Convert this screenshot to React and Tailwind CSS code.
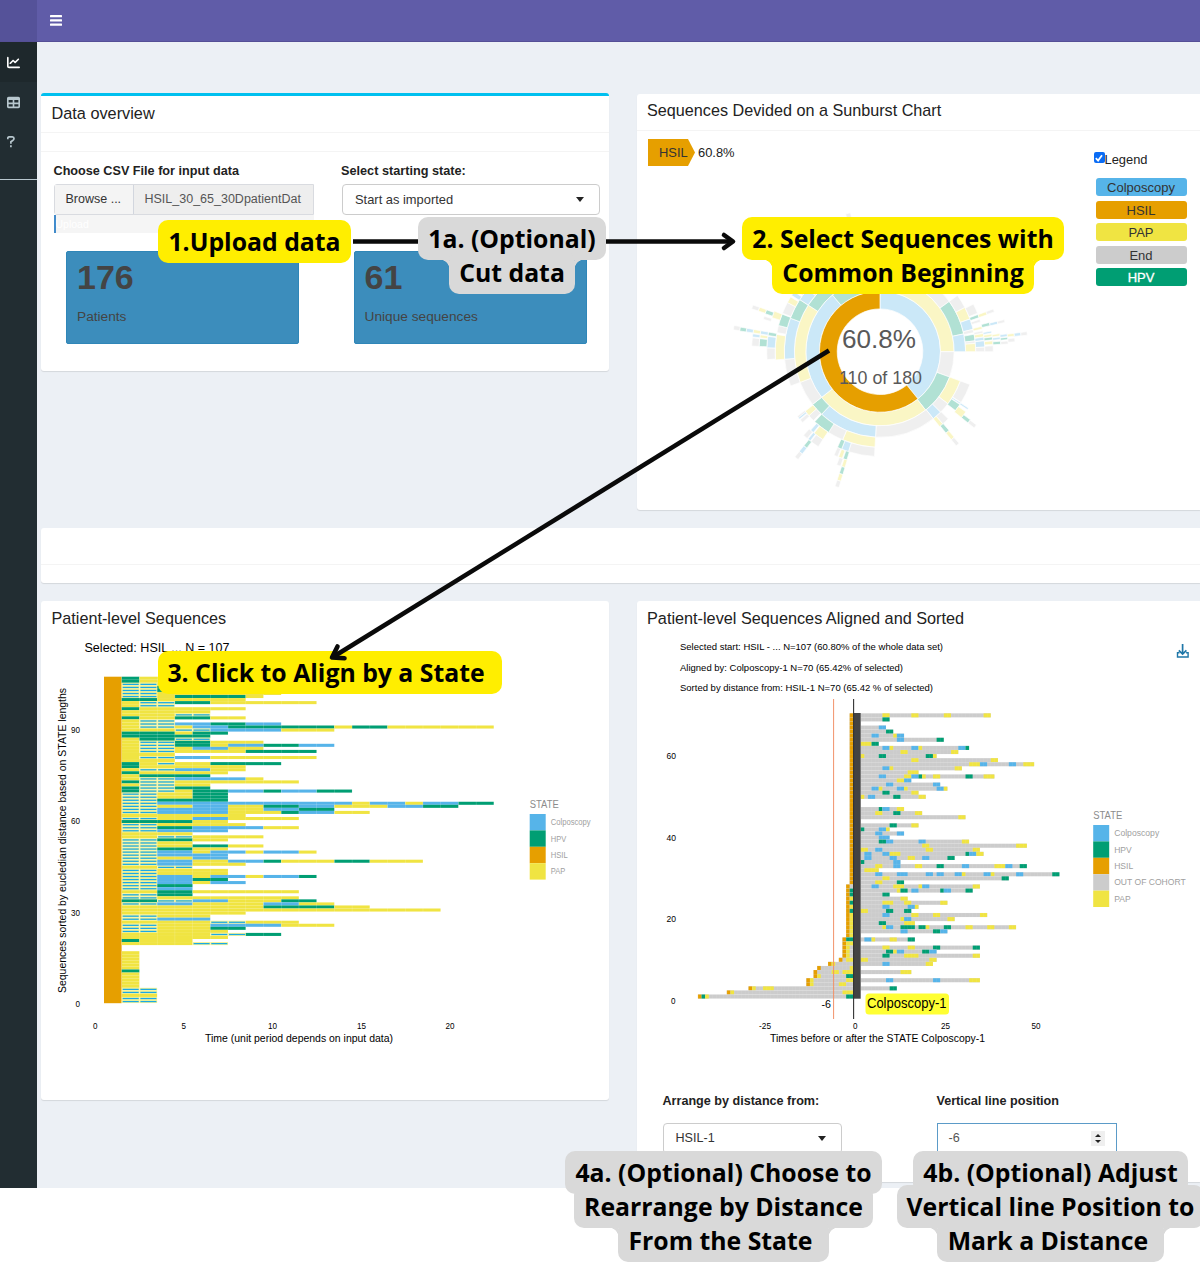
import React from "react";
import { FaChartLine, FaTable } from "react-icons/fa6";

const COLORS = {
  C: "#56b4e9",
  V: "#009e73",
  H: "#e69f00",
  P: "#f0e442",
  Y: "#f0e442",
  G: "#cccccc",
};

/* One string per patient: states that follow the first HSIL event. */
const SEQUENCES = [
  "VPPPP", "VPPPP", "bbPPP", "bbVPP", "bbVPP", "bbPPPPPPP", "bbPVVVVP", "VVPPPPP", "PbbVVPPPPPP", "Pbb",
  "VPPPPPP", "PPPPP", "PPPbb", "VPPVVPP", "Pbb", "PbbCCVVCC", "PbbPCCVVVVVVPVVPPPPPP", "PPPbbCCCCPPP", "VVVPVV", "VVVVV",
  "PVVbb", "PbbVVPPP", "PbbVVPCCVVCC", "PbbPCCPP", "PbbPPPPVVVV", "PPP", "PbbCCPPPPPP", "PPP", "VPbPPVVVV", "VPPPPPP",
  "PbbCCPP", "VPPPPP", "PVVVV", "PbbCCCCP", "VbbPPPPPPP", "PbbPP", "VbbVV", "VbbPVVCCVCCVV", "bbPPVV", "bbPPVV",
  "bbVVVV", "bbCCCCCCCCCCCPCCPCCVV", "bbPPCCPPVVCCPPPCCVV", "bbCCCCPPCCVV", "bbCCCCPPPVCCPP", "PPPPPPP", "bbPPCCPPPP", "VVVVPP", "bbPPPPP", "bbVVCCCCPP",
  "bbCCCC", "PPPP", "PPbbPPPP", "bbVVPP", "bbPP", "bbPPVVPP", "bbVVPP", "bbCCPCCPCCP", "bbCCCC", "bbPPCC",
  "bbCCPPCCVPPPVVPPP", "bbCCPPP", "PPbb", "bbPPPP", "bbPPPP", "bbCCPCCPCCV", "bbCCVV", "bbCCPCC", "bbVV", "bbCC",
  "PPVVPPPPPP", "bbVV", "bbPPPPPPPP", "VVbbCCPPPVV", "bbCCPPPPCCPP", "PPPPPPPPVVVVPP", "PPPPPPPPPPPPPPPPPP", "PPPPPPP", "bbPPP", "bbCCC",
  "PPPPPbbPPP", "bbPPPCCCCPPP", "bbPPPVV", "bbPPPP", "PPPPPbbVV", "PPPPPP", "VPPP", "PPPPbb", "", "",
  "P", "P", "P", "P", "P", "P", "V", "P", "P", "P", "P", "P", "bb", "bb", "PP", "bb", "bb",
];

function runs(text) {
  const out = [];
  for (let i = 0; i < text.length; i += 1) {
    const last = out[out.length - 1];
    if (last && last.c === text[i] && text[i] !== "b") last.n += 1;
    else out.push({ c: text[i], s: i, n: 1 });
  }
  return out;
}

/* Coloured spans after the aligned event; grey fills the space between them. */
const AFTER = [
  "Y6-8 Y14-16 Y23-25 Y34-36", "V6-8", "", "C5-7", "V7-9", "C3-5 Y9-10 C10-12", "C10-12 V21-23", "Y0-3 V3-5",
  "C6-8 Y8-9 C14-16 Y16-17 C27-29 V29-30", "Y11-13 Y25-27", "Y0-1 V5-7 V18-20 Y20-21", "Y14-16 Y36-38",
  "Y30-33 C33-35 C41-43 Y45-48", "C6-8 Y8-9 Y26-28", "Y13-16", "C5-7 Y12-14 C14-16 V16-17 Y17-18 Y20-22 V29-31 Y34-37",
  "Y10-12 C12-14", "C7-9 C20-22", "C3-5 Y5-6 C10-12 Y12-13 C21-23 Y23-24", "V6-8 Y14-16", "Y0-1 C2-4 V9-11 Y16-18",
  "", "", "V5-6 C6-8 Y10-12", "Y4-6 V9-11 Y15-17", "Y27-29", "", "V8-10 Y14-16", "V0-1 C5-7 Y7-8", "C4-6 C10-12", "C5-8",
  "V5-7 C7-9 C16-18 Y28-30", "Y17-19 Y43-46", "Y0-2 C4-6 Y18-20 Y31-33", "C1-3 C6-8 Y8-11 V29-30 C30-32 Y32-34",
  "C1-3 C8-10 Y13-15 C17-19 V24-26", "V0-1 C9-11", "Y4-6 C9-11 Y15-17 V21-23 C28-30 Y37-40 C40-42 V44-46", "Y1-5",
  "C4-6 C10-13 C18-20 C21-23 C26-28 Y28-29 C34-36 Y36-37 C43-45 V53-55", "Y6-8 V39-41", "Y4-6 V10-12",
  "C3-5 Y9-12 Y16-17 C17-19 Y31-33", "Y10-11 V11-13 C14-16 V22-23 C23-25 V29-31", "V6-8", "Y11-13", "Y6-9 Y12-14 Y22-24",
  "C6-8 C13-15 Y15-16", "Y0-2 V7-9 V12-14", "C6-8 Y14-16 Y20-22 Y33-35", "Y11-12 C12-14 Y24-26", "V5-7 Y12-15",
  "Y6-7 C7-9 V11-15 V16-18 Y18-19 V23-25 Y29-31 Y35-37 Y41-43", "C11-13 V20-22 C22-24", "", "C1-3 Y3-4 Y8-10 V13-15", "",
  "Y6-8 Y13-15 V20-22 V31-33", "V7-9 Y9-10 C10-12 V17-19 C19-21", "V6-8 Y12-16 Y31-33", "Y0-2 Y19-21", "C6-8 Y18-20", "",
  "Y11-14", "", "C7-9 C20-22 Y30-33", "", "V8-10", "", "",
];

/* Spans before the aligned event, counted backwards from it. */
const BEFORE = {
  42: "H2-1", 43: "H2-1 V1-0", 44: "H2-1 V1-0", 45: "H2-1 Y1-0", 46: "H2-1 V1-0", 47: "H2-1 Y1-0", 48: "H2-1 V1-0",
  49: "H2-1 Y1-0", 50: "H2-1 Y1-0", 51: "H2-1 Y1-0", 52: "H2-1 Y1-0", 53: "H2-1 Y1-0", 54: "H2-1 Y1-0",
  55: "H3-2 V2-0", 56: "H3-2 Y2-0", 57: "H3-2 Y2-1", 58: "H3-2 Y2-1", 59: "H3-2 Y2-1", 60: "H4-3 Y2-0",
  61: "H7-6 Y6-5", 62: "H10-9 Y1-0", 63: "H11-10 Y6-4 Y3-0", 64: "H11-10 Y10-9 V2-0", 65: "H13-12 Y12-11 Y2-0",
  66: "H13-12 Y12-11 Y4-2", 67: "H29-28 Y28-27 Y25-22", 68: "H35-34 Y34-33 Y3-0", 69: "H43-42 V42-41 Y41-40 V2-0",
};

const spans = (text) =>
  text
    ? text.split(" ").map((t) => {
        const [a, b] = t.slice(1).split("-").map(Number);
        return { c: t[0], a, b };
      })
    : [];

/* Sunburst arcs: ring, start angle, end angle, state. */
const ARCS = `2 0 90 Y|2 90 110 G|2 110 142 V|2 142 232 Y|2 232 320 C|2 320 342 V|2 342 360 Y
3 15 54 G|3 54 78 V|3 78 90 C|3 110 127.5 Y|3 127.5 135 G|3 135 141.5 C|3 141.5 183 G|3 183 223 C|3 223 232 V|3 232 249 G|3 249 303 Y|3 303 321 V|3 321 335 C
4 54 62.5 G|4 62.5 70 Y|4 70 76.5 C|4 76.5 78.5 G|4 79.5 83.5 V|4 83.5 85 G|4 85 90 Y
4 110 122 G|4 122.3 123.2 C|4 123.5 128 V|4 134.5 139 G|4 139 141.5 Y|4 183 203 Y|4 203 212.5 G|4 212.5 223 V|4 224 228 G|4 228 231.5 Y|4 249 265.5 G|4 265.5 290.5 C|4 290.5 303 V|4 303 311 C|4 311 320 G
5 63 68.5 G|5 69.2 71 V|5 72 73.5 G|5 76 77.5 Y|5 78.5 79.8 G|5 80 81.8 Y|5 82 83.8 C|5 84 87.5 C|5 87.5 90 G
5 122.5 123.5 C|5 125 129 Y|5 138.7 141 V|5 183 197.5 G|5 197.5 201.5 C|5 201.5 204 V|5 213 219 Y|5 219.5 221.5 C|5 227.5 229.5 G|5 230 232 G|5 230 231 C|5 265.5 279.5 Y|5 280.5 284.5 G|5 284.5 291 V|5 291.5 298 G|5 298 301.5 Y|5 302.5 305 C|5 306 312 G
6 69.3 71 Y|6 75 76.7 V|6 79.5 80.5 C|6 81 82.3 Y|6 82.5 84 V|6 84.5 86.3 Y|6 87 90 G|6 127 129 V|6 139 141 Y|6 197 199 V|6 199.5 201.5 Y|6 202 204 G|6 213 217.5 G|6 218 219.5 C|6 220 222.5 G|6 266 272 G|6 272 277.8 C|6 278.2 280 V|6 287.5 291 Y
7 69.3 70.8 G|7 75.4 76.8 C|7 81.4 82.5 Y|7 83 84.2 C|7 85 86.5 V|7 127.2 129 G|7 139.2 141 G|7 196.8 198.5 Y|7 199 201 G|7 217.2 219 V|7 272.5 276.2 V|7 276.6 278 Y|7 278.4 280 C|7 285.5 287 G|7 288.3 290.3 V
8 75.5 76.8 G|8 82 83.2 C|8 83.5 84.6 V|8 85.2 86.6 G|8 196.8 198.5 V|8 217.2 219 C|8 272.5 276.2 G|8 276.6 278 C|8 278.4 280 Y|8 288.5 290.3 Y
9 82.2 83.4 Y|9 84.2 85.8 G|9 196.8 198.5 Y|9 217.2 219 G|9 278.4 280 C|9 288.5 290.2 G
10 82.2 83.5 C|10 196.8 198.5 G|10 278.4 280 V|10 346 348 G
11 82.2 83.6 G|11 278.5 280.2 G`
  .split(/[|\n]/)
  .map((t) => t.trim().split(" "))
  .map(([r, a, b, c]) => ({ r: +r, a: +a, b: +b, c }));

function arcPath(ring, a0, a1) {
  const r0 = 42.8 * Math.sqrt(ring);
  const r1 = 42.8 * Math.sqrt(ring + 1);
  const pt = (r, a) => {
    const t = (a * Math.PI) / 180;
    return `${(880 + r * Math.sin(t)).toFixed(2)} ${(351.7 - r * Math.cos(t)).toFixed(2)}`;
  };
  const big = a1 - a0 > 180 ? 1 : 0;
  return `M${pt(r0, a0)}A${r0} ${r0} 0 ${big} 1 ${pt(r0, a1)}L${pt(r1, a1)}A${r1} ${r1} 0 ${big} 0 ${pt(r1, a0)}Z`;
}

function Label({ x, y, w, size, children, fill = "#000" }) {
  return (
    <text x={x} y={y} fontSize={size} textLength={w} lengthAdjust="spacingAndGlyphs" fill={fill}>
      {children}
    </text>
  );
}

function StateLegend({ x, y, items }) {
  return (
    <g>
      <Label x={x} y={y} w={29} size={10} fill="#8c8c8c">STATE</Label>
      {items.map(([c, name, w], i) => (
        <g key={name}>
          <rect x={x} y={y + 6 + i * 16.4} width="16" height="16.4" fill={COLORS[c]} />
          <Label x={x + 21} y={y + 17.1 + i * 16.4} w={w} size={8.8} fill="#a0a0a0">{name}</Label>
        </g>
      ))}
    </g>
  );
}

function PatientChart() {
  const u = 17.72;
  return (
    <svg viewBox="41 636 568 420" className="block h-[420px] w-[568px]">
      <Label x={84.5} y={652} w={145} size={12.3}>Selected: HSIL ... N = 107</Label>
      <rect x="104" y="676.7" width="17.7" height="326.5" fill={COLORS.H} />
      {SEQUENCES.map((row, k) => {
        const y = 676.7 + k * 3.05;
        return (
          <g key={k}>
            {runs(row).map(({ c, s, n }) => {
              const x = 121.7 + s * u;
              return c === "b" ? (
                <g key={s}>
                  <rect x={x} y={y} width={u} height="3.05" fill="#f6f391" />
                  <rect x={x + 1} y={y + 0.95} width={u - 1.7} height="1.25" fill="#1ba9e6" />
                </g>
              ) : (
                <rect key={s} x={x} y={y} width={n * u} height="3.05" fill={COLORS[c]} />
              );
            })}
          </g>
        );
      })}
      {Array.from({ length: 22 }, (_, i) => (
        <rect key={i} x={121.5 + i * u} y="676" width="0.5" height="328" fill="#fff" opacity="0.3" />
      ))}
      {[[90, 730, 71, 9], [60, 821.5, 71, 9], [30, 913, 71, 9], [0, 1004.5, 75.5, 4.5]].map(([t, y, x, w]) => (
        <Label key={t} x={x} y={y + 2.8} w={w} size={8.2}>{t}</Label>
      ))}
      {[[0, 93, 4.5], [5, 181.5, 4.5], [10, 268, 9], [15, 357, 9], [20, 445.5, 9]].map(([t, x, w]) => (
        <Label key={t} x={x} y={1029.3} w={w} size={8.2}>{t}</Label>
      ))}
      <Label x={205} y={1041.6} w={188} size={10.4}>Time (unit period depends on input data)</Label>
      <g transform="translate(66 993) rotate(-90)">
        <Label x={0} y={0} w={305} size={10.4}>Sequences sorted by eucledian distance based on STATE lengths</Label>
      </g>
      <StateLegend x={529.7} y={808} items={[["C", "Colposcopy", 40], ["V", "HPV", 15.5], ["H", "HSIL", 17], ["P", "PAP", 14.5]]} />
    </svg>
  );
}

function AlignedChart() {
  const u = 3.613;
  const h = 4.075;
  return (
    <svg viewBox="637 636 563 420" className="block h-[420px] w-[563px]">
      <Label x={680} y={650.3} w={263} size={9.4}>Selected start: HSIL - ... N=107 (60.80% of the whole data set)</Label>
      <Label x={680} y={670.8} w={223} size={9.4}>Aligned by: Colposcopy-1 N=70 (65.42% of selected)</Label>
      <Label x={680} y={691.3} w={253} size={9.4}>Sorted by distance from: HSIL-1 N=70 (65.42 % of selected)</Label>
      <g stroke="#1f77a8" strokeWidth="1.4" fill="none">
        <path d="M1182.6 644v9.5M1178.8 650.3l3.8 3.8 3.8-3.8" strokeWidth="1.7" />
        <path d="M1179.5 652.8h-2v4.2h10.6v-4.2h-2" />
      </g>
      {AFTER.map((row, k) => {
        const y = 713.3 + k * h;
        const after = spans(row);
        const before = spans(BEFORE[k] || "H1-0");
        return (
          <g key={k}>
            {after.length > 0 && <rect x="860.7" y={y} width={after[after.length - 1].b * u} height={h} fill="#ccc" />}
            <rect x={853.3 - before[0].a * u} y={y} width={before[0].a * u} height={h} fill="#ccc" />
            {after.map((s) => (
              <rect key={s.a} x={860.7 + s.a * u} y={y} width={(s.b - s.a) * u} height={h} fill={COLORS[s.c]} />
            ))}
            {before.map((s) => (
              <rect key={s.a} x={853.3 - s.a * u} y={y} width={(s.a - s.b) * u} height={h} fill={COLORS[s.c]} />
            ))}
          </g>
        );
      })}
      <g fill="#fff" opacity="0.12">
        {Array.from({ length: 100 }, (_, i) => (
          <rect key={i} x={860.5 + (i - 45) * u} y="713" width="0.5" height="286" />
        ))}
        {Array.from({ length: 70 }, (_, i) => (
          <rect key={i} x="698" y={713.1 + i * h} width="363" height="0.5" />
        ))}
      </g>
      <rect x="853.1" y="713" width="7.6" height="285.7" fill="#434343" />
      <path d="M853.6 699v320" stroke="#333" strokeWidth="1.1" />
      <path d="M833.6 699v320" stroke="#f2926b" strokeWidth="1" />
      <Label x={821.5} y={1008.3} w={9.5} size={10}>-6</Label>
      <rect x="865.5" y="993.5" width="83.5" height="21" rx="3.5" fill="#ffff33" />
      <Label x={867} y={1008.3} w={79.5} size={13.8}>Colposcopy-1</Label>
      {[[60, 756, 666.5, 9.5], [40, 838, 666.5, 9.5], [20, 919.5, 666.5, 9.5], [0, 1001, 671, 4.5]].map(([t, y, x, w]) => (
        <Label key={t} x={x} y={y + 2.8} w={w} size={8.2}>{t}</Label>
      ))}
      {[[-25, 759, 12], [0, 853, 4.5], [25, 941, 9], [50, 1031.5, 9]].map(([t, x, w]) => (
        <Label key={t} x={x} y={1029.3} w={w} size={8.2}>{t}</Label>
      ))}
      <Label x={770} y={1041.6} w={215} size={10.4}>Times before or after the STATE Colposcopy-1</Label>
      <StateLegend
        x={1093.2}
        y={819}
        items={[["C", "Colposcopy", 45], ["V", "HPV", 17.5], ["H", "HSIL", 19], ["G", "OUT OF COHORT", 71.5], ["P", "PAP", 16.5]]}
      />
    </svg>
  );
}

function Sunburst() {
  return (
    <svg viewBox="637 200 400 300" className="block h-[300px] w-[400px]">
      <g stroke="#fff" strokeWidth="0.7">
        <g opacity="0.3">
          <path d={arcPath(1, 0, 141.2)} fill={COLORS.C} />
          {ARCS.map((s, i) => (
            <path key={i} d={arcPath(s.r, s.a, s.b)} fill={COLORS[s.c]} />
          ))}
        </g>
        <path d={arcPath(1, 141.2, 360)} fill={COLORS.H} />
      </g>
      <Label x={842} y={347.5} w={74} size={26.5} fill="#595959">60.8%</Label>
      <Label x={839} y={383.5} w={83} size={17.8} fill="#595959">110 of 180</Label>
    </svg>
  );
}

function Caret() {
  return <span className="h-0 w-0 border-x-[4.5px] border-t-[5px] border-x-transparent border-t-[#222]" />;
}

function ValueBox({ value, label }) {
  return (
    <div className="h-[93px] w-[233px] rounded-[2px] border border-[#2f86b8] bg-[#3c8dbc] px-[10px] pt-[5px] text-[#444]">
      <div className="text-[34px] font-bold leading-[40px]">{value}</div>
      <div className="mt-[11px] text-[13.7px] leading-[18px]">{label}</div>
    </div>
  );
}

const STATE_KEYS = [
  ["Colposcopy", "bg-[#56b4e9] text-[#333]"],
  ["HSIL", "bg-[#e69f00] text-[#333]"],
  ["PAP", "bg-[#f0e442] text-[#333]"],
  ["End", "bg-[#cccccc] text-[#333]"],
  ["HPV", "bg-[#009e73] text-white [-webkit-text-stroke:0.3px_white]"],
];

/* Annotation made of stacked rounded lines. */
function Note({ className, lines }) {
  return (
    <div className={"absolute flex flex-col items-center font-['Open_Sans',sans-serif] text-[24.8px] font-bold leading-[34px] text-black " + className}>
      {lines.map(([text, cls]) => (
        <div key={text} className={"relative flex h-[43px] shrink-0 items-center justify-center rounded-[10px] whitespace-nowrap pb-[1px] not-first:-mt-[9px] " + cls}>
          <span className="relative z-10">{text}</span>
        </div>
      ))}
    </div>
  );
}

function Fillet({ className }) {
  return <span className={"absolute size-[9px] " + className} />;
}

export default function App() {
  return (
    <div className="relative h-[1269px] w-[1200px] overflow-hidden bg-white font-['Liberation_Sans',Arial,sans-serif] text-[#222]">
      <header className="flex h-[42px] border-b border-[#554f96] bg-[#605ca8]">
        <div className="w-[37px] bg-[#555299]" />
        <svg viewBox="0 0 12 11" className="ml-[13px] mt-[14.5px] h-[11px] w-[12px]" fill="#fff">
          <rect y="0" width="12" height="2.2" rx="0.5" />
          <rect y="4.3" width="12" height="2.2" rx="0.5" />
          <rect y="8.5" width="12" height="2.2" rx="0.5" />
        </svg>
      </header>
      <div className="flex h-[1146px]">
        <aside className="flex w-[36.5px] shrink-0 flex-col bg-[#222d32]">
          <div className="flex h-[40px] items-center bg-[#1e282c] pl-[7px]">
            <FaChartLine className="size-[13px] text-white" />
          </div>
          <div className="flex h-[40px] items-center pl-[7px]">
            <FaTable className="size-[13px] text-[#b8c7ce]" />
          </div>
          <div className="flex h-[40px] items-center pl-[7px]">
            <svg viewBox="0 0 8 12" className="h-[12px] w-[8px]" fill="none" stroke="#b8c7ce" strokeWidth="1.7">
              <path d="M.8 3.2V1.8Q1 1 2 .9h3.4Q7 1 7 2.6q0 1.3-1.3 2L3.9 5.8v2" />
              <path d="M3.9 9.3v1.9" />
            </svg>
          </div>
          <div className="mt-[17px] h-px bg-[#b8c7ce]" />
        </aside>

        <main className="flex-1 overflow-hidden bg-[#ecf0f5] pl-[4.5px] pt-[51px]">
          <div className="flex h-[435px] items-start gap-[28px]">
            <section className="h-[278px] w-[568px] shrink-0 rounded-[3px] border-t-[3px] border-[#00c0ef] bg-white shadow-[0_1px_1px_rgba(0,0,0,0.1)]">
              <h2 className="h-[37px] border-b border-[#f4f4f4] pl-[10.5px] text-[16.3px] leading-[34px]">Data overview</h2>
              <div className="h-[19px] border-b border-[#f4f4f4]" />
              <div className="flex pl-[12.5px] pt-[9px]">
                <div className="w-[287.5px]">
                  <div className="text-[12.65px] font-bold leading-[20px]">Choose CSV File for input data</div>
                  <div className="mt-[3px] flex h-[31px] w-[260px] rounded-l-[3px] border border-[#d9dbe0] text-[12.5px] leading-[29px]">
                    <span className="w-[79px] border-r border-[#d2d6de] bg-[#f4f4f4] pl-[11px] text-[#333]">Browse ...</span>
                    <span className="flex-1 bg-[#eeeeee] pl-[11px] text-[#555]">HSIL_30_65_30DpatientDat</span>
                  </div>
                  <div className="h-[18px] w-[260px] border-l-2 border-[#428bca] bg-[#f5f5f5] text-[10.5px] leading-[18px] text-white">Upload</div>
                </div>
                <div>
                  <div className="text-[12.7px] font-bold leading-[20px]">Select starting state:</div>
                  <div className="ml-px mt-[3px] flex h-[31px] w-[258px] items-center justify-between rounded-[4px] border border-[#ccc] pl-[12px] pr-[15px] text-[12.9px] text-[#333]">
                    Start as imported
                    <Caret />
                  </div>
                </div>
              </div>
              <div className="mt-[18px] flex gap-[54.5px] pl-[25px]">
                <ValueBox value="176" label="Patients" />
                <ValueBox value="61" label="Unique sequences" />
              </div>
            </section>

            <section className="mt-px h-[416px] w-[563px] shrink-0 self-start rounded-l-[3px] bg-white shadow-[0_1px_1px_rgba(0,0,0,0.1)]">
              <h2 className="h-[37px] border-b border-[#f4f4f4] pl-[10px] text-[16.2px] leading-[33px]">Sequences Devided on a Sunburst Chart</h2>
              <div className="flex">
                <div className="w-[400px]">
                  <div className="flex items-center pl-[11px] pt-[8px] text-[12.9px] text-[#333]">
                    <span className="h-[27px] w-[47px] bg-[#e69f00] pl-[11px] leading-[28px] [clip-path:polygon(0_0,40px_0,100%_50%,40px_100%,0_100%)]">HSIL</span>
                    <span className="ml-[3px] text-[#222]">60.8%</span>
                  </div>
                  <div className="mt-[34px]">
                    <Sunburst />
                  </div>
                </div>
                <div className="pl-[56.5px] pt-[20px]">
                  <div className="flex h-[16px] items-center text-[12.9px]">
                    <span className="mt-[-3px] flex size-[11px] items-center justify-center rounded-[2px] bg-[#0a6cf5]">
                      <svg viewBox="0 0 10 10" className="size-[10px]" fill="none" stroke="#fff" strokeWidth="1.7">
                        <path d="M1.8 5.2l2.3 2.4L8 2.2" />
                      </svg>
                    </span>
                    <span className="mt-px">Legend</span>
                  </div>
                  <div className="mt-[11px] flex flex-col gap-[4.6px] pl-[2px]">
                    {STATE_KEYS.map(([name, cls]) => (
                      <div key={name} className={"h-[18px] w-[91px] rounded-[3px] text-center text-[13px] leading-[19px] " + cls}>
                        {name}
                      </div>
                    ))}
                  </div>
                </div>
              </div>
            </section>
          </div>

          <div className="h-[55px] rounded-l-[3px] bg-white pt-[36px] shadow-[0_1px_1px_rgba(0,0,0,0.1)]">
            <div className="h-px bg-[#f4f4f4]" />
          </div>

          <div className="mt-[18px] flex items-start gap-[28px]">
            <section className="h-[499px] w-[568px] shrink-0 rounded-[3px] bg-white shadow-[0_1px_1px_rgba(0,0,0,0.1)]">
              <h2 className="h-[35px] pl-[10.5px] text-[16.2px] leading-[35px]">Patient-level Sequences</h2>
              <PatientChart />
            </section>
            <section className="h-[581px] w-[563px] shrink-0 rounded-l-[3px] bg-white shadow-[0_1px_1px_rgba(0,0,0,0.1)]">
              <h2 className="h-[35px] pl-[10px] text-[16.25px] leading-[35px]">Patient-level Sequences Aligned and Sorted</h2>
              <AlignedChart />
              <div className="flex pl-[25.5px] pt-[35px] text-[12.6px]">
                <div className="w-[274px]">
                  <div className="font-bold leading-[20px]">Arrange by distance from:</div>
                  <div className="mt-[12px] flex h-[31px] w-[179px] items-center justify-between rounded-[4px] border border-[#ccc] pl-[12px] pr-[15px] text-[#333]">
                    HSIL-1
                    <Caret />
                  </div>
                </div>
                <div>
                  <div className="font-bold leading-[20px]">Vertical line position</div>
                  <div className="mt-[12px] flex h-[31px] w-[180px] items-center justify-between border border-[#5b9bc8] pl-[11px] pr-[11px] text-[#555]">
                    -6
                    <span className="flex h-[15px] w-[14px] flex-col items-center justify-center gap-[3px] bg-[#efefef]">
                      <span className="border-x-[3px] border-b-[3.5px] border-x-transparent border-b-[#222]" />
                      <span className="border-x-[3px] border-t-[3.5px] border-x-transparent border-t-[#222]" />
                    </span>
                  </div>
                </div>
              </div>
            </section>
          </div>
        </main>
      </div>

      <Note className="left-[158px] top-[220px]" lines={[["1.Upload data", "w-[193px] bg-[#ffee00]"]]} />
      <div className="absolute left-[418px] top-[217px]">
        <Note
          className="left-0 top-0 w-[188px]"
          lines={[["1a. (Optional)", "w-[188px] bg-[#d9d9d9]"], ["Cut data", "w-[126px] bg-[#d9d9d9]"]]}
        />
        <Fillet className="left-[22px] top-[43px] bg-[radial-gradient(circle_at_0_100%,transparent_9px,#d9d9d9_9.5px)]" />
        <Fillet className="left-[157px] top-[43px] bg-[radial-gradient(circle_at_100%_100%,transparent_9px,#d9d9d9_9.5px)]" />
      </div>
      <div className="absolute left-[742px] top-[217px]">
        <Note
          className="left-0 top-0 w-[322px]"
          lines={[["2. Select Sequences with", "w-[322px] bg-[#ffee00]"], ["Common Beginning", "w-[262px] bg-[#ffee00]"]]}
        />
        <Fillet className="left-[21px] top-[43px] bg-[radial-gradient(circle_at_0_100%,transparent_9px,#ffee00_9.5px)]" />
        <Fillet className="left-[292px] top-[43px] bg-[radial-gradient(circle_at_100%_100%,transparent_9px,#ffee00_9.5px)]" />
      </div>
      <Note className="left-[158px] top-[651px]" lines={[["3. Click to Align by a State", "w-[344px] bg-[#ffee00] pr-[8px]"]]} />
      <div className="absolute left-[565px] top-[1151px]">
        <Note
          className="left-0 top-0 w-[317px]"
          lines={[
            ["4a. (Optional) Choose to", "w-[317px] bg-[#d9d9d9]"],
            ["Rearrange by Distance", "w-[299px] bg-[#d9d9d9]"],
            ["From the State", "w-[211px] bg-[#d9d9d9] pr-[6px]"],
          ]}
        />
        <Fillet className="left-[44px] top-[77px] bg-[radial-gradient(circle_at_0_100%,transparent_9px,#d9d9d9_9.5px)]" />
        <Fillet className="left-[264px] top-[77px] bg-[radial-gradient(circle_at_100%_100%,transparent_9px,#d9d9d9_9.5px)]" />
      </div>
      <div className="absolute left-[897px] top-[1151px]">
        <Note
          className="left-0 top-0 w-[307px]"
          lines={[
            ["4b. (Optional) Adjust", "w-[275px] bg-[#d9d9d9]"],
            ["Vertical line Position to", "w-[307px] bg-[#d9d9d9]"],
            ["Mark a Distance", "w-[227px] bg-[#d9d9d9] pr-[5px]"],
          ]}
        />
        <Fillet className="left-[31px] top-[77px] bg-[radial-gradient(circle_at_0_100%,transparent_9px,#d9d9d9_9.5px)]" />
        <Fillet className="left-[267px] top-[77px] bg-[radial-gradient(circle_at_100%_100%,transparent_9px,#d9d9d9_9.5px)]" />
      </div>

      <svg viewBox="0 0 1200 1269" className="pointer-events-none absolute inset-0 z-20 h-[1269px] w-[1200px]" fill="none" stroke="#0a0a0a" strokeWidth="4.6" strokeLinejoin="round">
        <path d="M353 241.5h65M606 241.5h127" />
        <path d="M724 235l9 6.5-9 6.5" strokeLinecap="round" />
        <path d="M829 350.5L333 657" />
        <path d="M337.5 646.5L332 657.5l12.5 0.7" strokeLinecap="round" />
      </svg>
    </div>
  );
}
